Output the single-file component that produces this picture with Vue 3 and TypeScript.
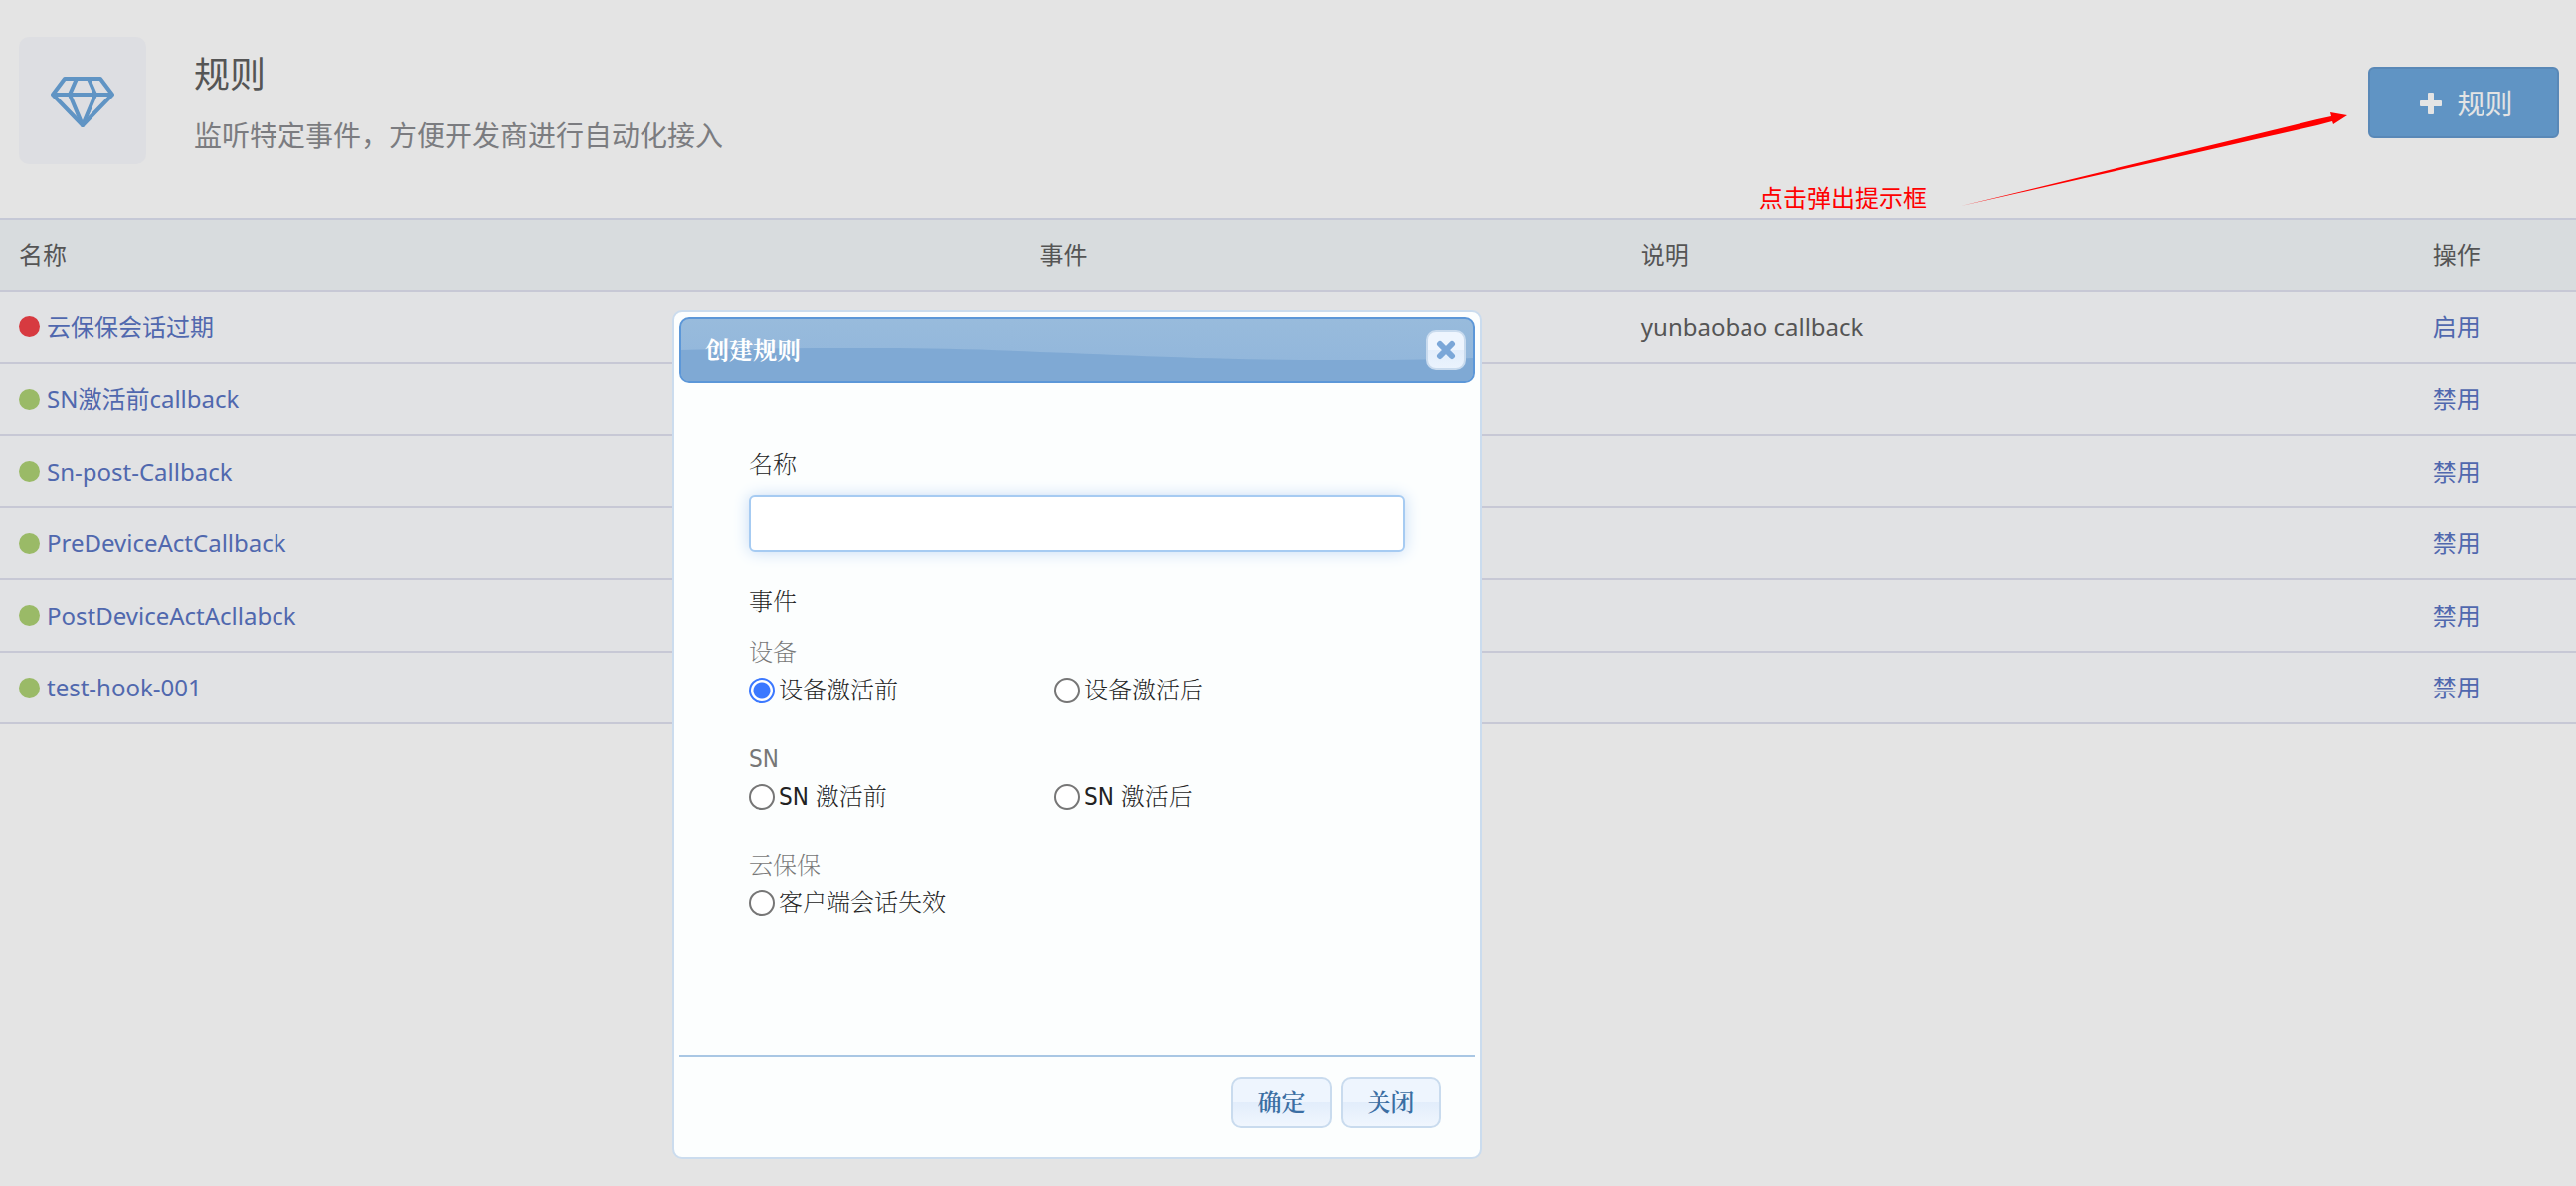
<script setup lang="ts">
import { ref } from 'vue'

interface Rule {
  name: string
  enabled: boolean
  note: string
}

interface EventGroup {
  title: string
  options: { id: string; label: string }[]
}

const rules: Rule[] = [
  { name: '云保保会话过期', enabled: false, note: 'yunbaobao callback' },
  { name: 'SN激活前callback', enabled: true, note: '' },
  { name: 'Sn-post-Callback', enabled: true, note: '' },
  { name: 'PreDeviceActCallback', enabled: true, note: '' },
  { name: 'PostDeviceActAcllabck', enabled: true, note: '' },
  { name: 'test-hook-001', enabled: true, note: '' },
]

const groups: EventGroup[] = [
  {
    title: '设备',
    options: [
      { id: 'pre-device', label: '设备激活前' },
      { id: 'post-device', label: '设备激活后' },
    ],
  },
  {
    title: 'SN',
    options: [
      { id: 'pre-sn', label: 'SN 激活前' },
      { id: 'post-sn', label: 'SN 激活后' },
    ],
  },
  { title: '云保保', options: [{ id: 'session-expired', label: '客户端会话失效' }] },
]

const ruleName = ref('')
const event = ref('pre-device')
</script>

<template>
  <main class="page">
    <header class="top">
      <div class="tile">
        <svg class="gem" viewBox="0 0 64 52" fill="none" stroke="#6094c4" stroke-width="4" stroke-linejoin="round">
          <path d="M14 2H50L62 18L32 49L2 18Z" />
          <path d="M2 18H62M26 2L19 18L32 49L45 18L38 2" />
        </svg>
      </div>
      <div class="heading">
        <h1>规则</h1>
        <p>监听特定事件，方便开发商进行自动化接入</p>
      </div>
      <button type="button" class="add">
        <svg class="plus" viewBox="0 0 22 22" aria-hidden="true">
          <rect x="8" y="0" width="6" height="22" rx="1" fill="#e4e4e4" />
          <rect x="0" y="8" width="22" height="6" rx="1" fill="#e4e4e4" />
        </svg>
        <span>规则</span>
      </button>
      <div class="note">
        <span>点击弹出提示框</span>
        <svg class="arrow" viewBox="0 0 388 94" aria-hidden="true">
          <path d="M0 94L358 7L372 4L371 0L388 3L374 12L373 9L358 13Z" fill="#f00" />
        </svg>
      </div>
    </header>

    <table class="rules">
      <thead>
        <tr>
          <th class="c-name">名称</th>
          <th class="c-event">事件</th>
          <th class="c-note">说明</th>
          <th>操作</th>
        </tr>
      </thead>
      <tbody>
        <tr v-for="rule in rules" :key="rule.name">
          <td>
            <div class="name">
              <i class="dot" :class="{ on: rule.enabled }"></i>
              <a href="#">{{ rule.name }}</a>
            </div>
          </td>
          <td></td>
          <td>{{ rule.note }}</td>
          <td><a href="#">{{ rule.enabled ? '禁用' : '启用' }}</a></td>
        </tr>
      </tbody>
    </table>

    <section class="dialog" role="dialog" aria-labelledby="dialog-title">
      <div class="bar">
        <svg class="wave" viewBox="0 0 796 62" preserveAspectRatio="none" aria-hidden="true">
          <path d="M0 31C60 29 130 29 200 29C350 29 470 41 660 41C710 41 750 41 796 39V62H0Z" fill="#7fa9d4" />
        </svg>
        <h2 id="dialog-title">创建规则</h2>
        <button type="button" class="close" aria-label="关闭">
          <svg viewBox="0 0 20 20" aria-hidden="true">
            <path d="M4 4L16 16M16 4L4 16" stroke="#7ba7d8" stroke-width="6" stroke-linecap="round" />
          </svg>
        </button>
      </div>

      <form class="form" @submit.prevent>
        <label class="label" for="rule-name">名称</label>
        <input id="rule-name" v-model="ruleName" class="field" type="text" />
        <div class="label">事件</div>
        <fieldset v-for="group in groups" :key="group.title" class="group">
          <legend>{{ group.title }}</legend>
          <div class="options">
            <label v-for="option in group.options" :key="option.id" class="option">
              <input v-model="event" type="radio" name="event" :value="option.id" />
              <span>{{ option.label }}</span>
            </label>
          </div>
        </fieldset>
      </form>

      <div class="actions">
        <button type="button">确定</button>
        <button type="button">关闭</button>
      </div>
    </section>
  </main>
</template>

<style>
body {
  background: #e4e4e4;
}
</style>

<style scoped>
.page {
  position: relative;
  min-height: 100vh;
  box-sizing: border-box;
  color: #555;
  font: 24px/32px "Noto Sans", "Noto Sans CJK SC", sans-serif;
}

button,
input {
  box-sizing: border-box;
  margin: 0;
  font: inherit;
}

a {
  color: #5068ae;
  text-decoration: none;
}

.top {
  position: relative;
  display: flex;
  align-items: flex-start;
  box-sizing: border-box;
  min-height: 219px;
  padding: 37px 17px 0 19px;
}

.tile {
  display: flex;
  align-items: center;
  justify-content: center;
  box-sizing: border-box;
  width: 128px;
  height: 128px;
  padding-top: 4px;
  border-radius: 10px;
  background: #dddee2;
}

.gem {
  width: 64px;
  height: 52px;
}

.heading {
  flex: 1;
  margin-left: 48px;
  padding-top: 14px;
}

h1 {
  margin: 0;
  font-size: 36px;
  line-height: 48px;
  font-weight: 400;
}

.heading p {
  margin: 17px 0 0;
  color: #7b7c80;
  font-size: 28px;
  line-height: 40px;
}

.add {
  display: flex;
  align-items: center;
  justify-content: center;
  gap: 15px;
  width: 192px;
  height: 72px;
  margin-top: 30px;
  padding: 2px 0 0 6px;
  border: 2px solid #5988b7;
  border-radius: 6px;
  background: #6094c4;
  color: #e4e4e4;
  font-size: 28px;
}

.plus {
  width: 22px;
  height: 22px;
}

.note {
  position: absolute;
  right: 230px;
  bottom: 4px;
  display: flex;
  align-items: flex-end;
  gap: 35px;
  color: #f00;
}

.arrow {
  width: 388px;
  height: 94px;
  margin-bottom: 8px;
}

.rules {
  width: 100%;
  border-spacing: 0;
  table-layout: fixed;
  border-top: 2px solid #c5c8d6;
}

.rules th,
.rules td {
  height: 70px;
  padding: 0 0 0 19px;
  border-bottom: 2px solid #c7c8d5;
  text-align: left;
  font-weight: 400;
}

.rules th {
  background: #d8dcde;
}

.rules td {
  background: #e1e2e4;
}

.rules tbody tr:nth-child(odd) td {
  height: 71px;
}

.c-name {
  width: 38.9%;
}

.c-event {
  width: 22.6%;
}

.c-note {
  width: 30%;
}

.name {
  display: flex;
  align-items: center;
  gap: 7px;
}

.dot {
  width: 21px;
  height: 21px;
  border-radius: 50%;
  background: #d73a40;
}

.dot.on {
  background: #9aba67;
}

.dialog {
  position: absolute;
  top: 312px;
  left: 676px;
  display: flex;
  flex-direction: column;
  box-sizing: border-box;
  width: 814px;
  padding: 5px;
  border: 2px solid #cbdcee;
  border-radius: 10px;
  background: #fcfefe;
  color: #222;
  font-family: "DejaVu Sans Condensed", "Noto Serif CJK SC", "Noto Sans CJK SC", sans-serif;
  font-weight: 200;
}

.bar {
  position: relative;
  display: flex;
  align-items: center;
  justify-content: space-between;
  box-sizing: border-box;
  height: 66px;
  padding: 0 7px 0 24px;
  border: 2px solid #5c97d8;
  border-radius: 10px;
  overflow: hidden;
  background: linear-gradient(#98bbdc, #90b5db);
}

.wave {
  position: absolute;
  inset: 0;
  width: 100%;
  height: 100%;
}

h2 {
  position: relative;
  margin: 0;
  padding-top: 2px;
  color: #fff;
  font-size: 24px;
  line-height: 32px;
  font-weight: 700;
}

.close {
  position: relative;
  display: flex;
  align-items: center;
  justify-content: center;
  width: 40px;
  height: 40px;
  padding: 0;
  border: 2px solid #c9dbee;
  border-radius: 10px;
  background: linear-gradient(#eef5fe 50%, #e2edfb 50%, #eaf3fd);
}

.close svg {
  width: 20px;
  height: 20px;
}

.form {
  display: flex;
  flex-direction: column;
  min-height: 675px;
  box-sizing: border-box;
  padding: 66px 70px 0;
}

.label {
  height: 32px;
}

.field {
  width: 100%;
  height: 57px;
  margin: 15px 0 34px;
  padding: 0 12px;
  border: 2px solid #a6cbf2;
  border-radius: 6px;
  outline: none;
  background: #fff;
  box-shadow: 0 0 16px #c5dbf6;
}

.group {
  min-width: 0;
  height: 107px;
  margin: 0;
  padding: 0;
  border: 0;
}

.label + .group {
  margin-top: 19px;
}

legend {
  padding: 0;
  color: #777;
}

.options {
  display: flex;
  padding-top: 6px;
}

.option {
  display: flex;
  align-items: center;
  width: 307px;
  gap: 4px;
}

.option input {
  appearance: none;
  width: 26px;
  height: 26px;
  border: 2px solid #767676;
  border-radius: 50%;
  background: #fff;
}

.option input:checked {
  border-color: #3b78ff;
  background: radial-gradient(circle, #3b78ff 8px, #fff 9px);
}

.actions {
  display: flex;
  justify-content: flex-end;
  gap: 9px;
  padding: 20px 34px 24px;
  border-top: 2px solid #a9c7e4;
}

.actions button {
  width: 101px;
  height: 52px;
  padding: 2px 0 0;
  border: 2px solid #c9dbee;
  border-radius: 10px;
  background: linear-gradient(#eef5fe 50%, #e2edfb 50%, #f0f6fe);
  color: #3b6ea3;
  font-weight: 600;
}
</style>
